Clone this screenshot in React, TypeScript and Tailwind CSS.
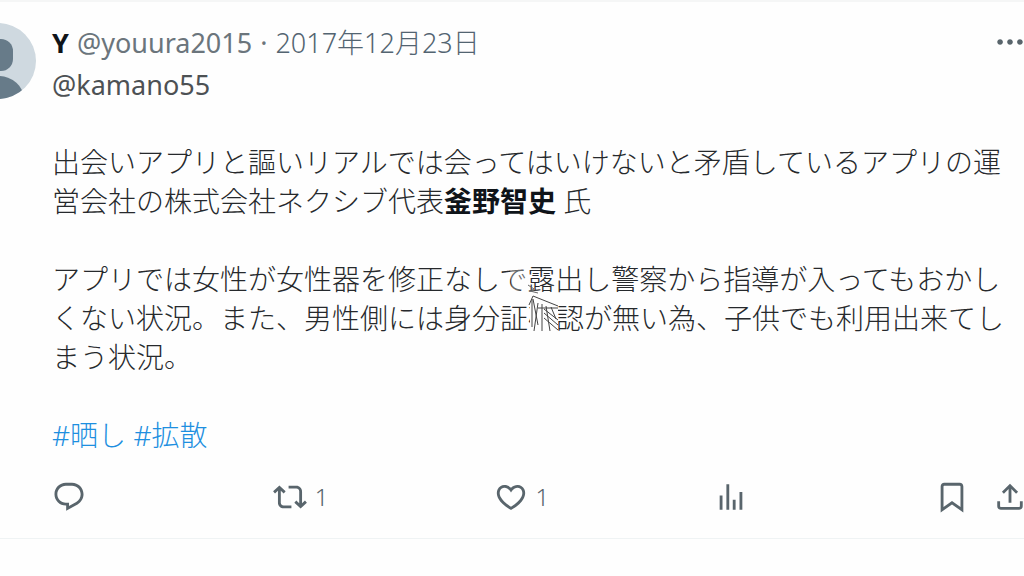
import type { ReactNode } from 'react';

const icons = {
  reply:
    'M1.751 10c0-4.42 3.584-8 8.005-8h4.366c4.49 0 8.129 3.64 8.129 8.13 0 2.96-1.607 5.68-4.196 7.11l-8.054 4.46v-3.69h-.067c-4.49.1-8.183-3.51-8.183-8.01zm8.005-6c-3.317 0-6.005 2.69-6.005 6 0 3.37 2.77 6.08 6.138 6.01l.351-.01h1.761v2.3l5.087-2.81c1.951-1.08 3.163-3.13 3.163-5.36 0-3.39-2.744-6.13-6.129-6.13H9.756z',
  repost:
    'M4.5 3.88l4.432 4.14-1.364 1.46L5.5 7.55V16c0 1.1.896 2 2 2H13v2H7.5c-2.209 0-4-1.79-4-4V7.55L1.432 9.48.068 8.02 4.5 3.88zM16.5 6H11V4h5.5c2.209 0 4 1.79 4 4v8.45l2.068-1.93 1.364 1.46-4.432 4.14-4.432-4.14 1.364-1.46 2.068 1.93V8c0-1.1-.896-2-2-2z',
  like: 'M16.697 5.5c-1.222-.06-2.679.51-3.89 2.16l-.805 1.09-.806-1.09C9.984 6.01 8.526 5.44 7.304 5.5c-1.243.07-2.349.78-2.91 1.91-.552 1.12-.633 2.78.479 4.82 1.074 1.97 3.257 4.27 7.129 6.61 3.87-2.34 6.052-4.64 7.126-6.61 1.111-2.04 1.03-3.7.477-4.82-.561-1.13-1.666-1.84-2.908-1.91zm4.187 7.69c-1.351 2.48-4.001 5.12-8.379 7.67l-.503.3-.504-.3c-4.379-2.55-7.029-5.19-8.382-7.67-1.36-2.5-1.41-4.86-.514-6.67.887-1.79 2.647-2.91 4.601-3.01 1.651-.09 3.368.56 4.798 2.01 1.429-1.45 3.146-2.1 4.796-2.01 1.954.1 3.714 1.22 4.601 3.01.896 1.81.846 4.17-.514 6.67z',
  views: 'M8.75 21V3h2v18h-2zM18 21V8.5h2V21h-2zM4 21l.004-10h2L6 21H4zm9.248 0v-7h2v7h-2z',
  bookmark:
    'M4 4.5C4 3.12 5.119 2 6.5 2h11C18.881 2 20 3.12 20 4.5v18.44l-8-5.71-8 5.71V4.5zM6.5 4c-.276 0-.5.22-.5.5v14.56l6-4.29 6 4.29V4.5c0-.28-.224-.5-.5-.5h-11z',
  share:
    'M12 2.59l5.7 5.7-1.41 1.42L13 6.41V16h-2V6.41l-3.3 3.3-1.41-1.42L12 2.59zM21 15l-.02 3.51c0 1.38-1.12 2.49-2.5 2.49H5.5C4.11 21 3 19.88 3 18.5V15h2v3.5c0 .28.22.5.5.5h12.98c.28 0 .5-.22.5-.5L19 15h2z',
  more: 'M3 12c0-1.1.9-2 2-2s2 .9 2 2-.9 2-2 2-2-.9-2-2zm9 2c1.1 0 2-.9 2-2s-.9-2-2-2-2 .9-2 2 .9 2 2 2zm7 0c1.1 0 2-.9 2-2s-.9-2-2-2-2 .9-2 2 .9 2 2 2z',
};

function IconButton({ icon, label, count }: { icon: keyof typeof icons; label: string; count?: number }) {
  return (
    <button type="button" aria-label={label} className="flex items-center gap-2 text-[#59656c]">
      <svg viewBox="0 0 24 24" className="size-[34px] shrink-0 fill-current" aria-hidden="true">
        <path d={icons[icon]} />
      </svg>
      {count !== undefined && <span className="text-2xl leading-8">{count}</span>}
    </button>
  );
}

function Avatar() {
  return (
    <svg viewBox="0 0 76 76" className="size-[76px] shrink-0" aria-hidden="true">
      <defs>
        <clipPath id="avatar">
          <circle cx="38" cy="38" r="38" />
        </clipPath>
      </defs>
      <g clipPath="url(#avatar)">
        <rect width="76" height="76" fill="#cfd9e0" />
        <rect x="23" y="16" width="30" height="32" rx="12" fill="#677b89" />
        <ellipse cx="38" cy="76" rx="26" ry="23" fill="#677b89" />
      </g>
    </svg>
  );
}

// mouse pointer with its trail, floating over the post text
function Pointer() {
  return (
    <svg viewBox="0 0 60 72" className="absolute left-[458px] top-[198px] w-[60px] h-[72px]" fill="none" aria-hidden="true">
      <path d="M0 6 L17 4 L19 12 L15 26 L2 30 Z" fill="#fefefe" opacity="0.3" />
      <path d="M23 32 L48 42 L48 69 L20 69 L20 40 Z" fill="#fefefe" />
      <path
        d="M23 33 L48 43 M23 33 L19 42 M22 36 V64 M23 36 L28 62 M28 40 L24 68 M32 41 V68 M28 45 H48 M34 46 L48 57 M34 50 L48 62 M34 55 L48 67 M36 43 L40 68 M41 44 L46 56"
        stroke="#444"
      />
      <path d="M18 22 L24 26 L20 28 L28 30" stroke="#666" />
    </svg>
  );
}

function HashLink({ children }: { children: ReactNode }) {
  return (
    <a href="#" className="text-[#1d8fe0]">
      {children}
    </a>
  );
}

export default function App() {
  return (
    <main className="min-h-screen overflow-hidden bg-[#fefefe] border-t-2 border-[#f5f6f6] font-['Noto_Sans','Noto_Sans_CJK_JP',sans-serif] font-light text-[#26292c]">
      <article className="-ml-10 -mr-[3px] flex gap-4 pt-[21px] pb-6 border-b border-[#eff3f4]">
        <Avatar />
        <div className="flex-1 min-w-0">
          <header className="flex items-center justify-between h-[38px]">
            <div className="flex gap-2 text-[27px] leading-[39px] font-normal text-[#6b757c]">
              <span className="font-bold text-[#0f1419]">Y</span>
              <a href="#">@youura2015</a>
              <span>·</span>
              <time dateTime="2017-12-23" className="font-light text-[#536471]">
                2017年12月23日
              </time>
            </div>
            <IconButton icon="more" label="もっと見る" />
          </header>

          <div className="relative mt-1 text-[28px] leading-[39px]">
            <p className="text-[27px] font-normal text-[#4d5154]">@kamano55</p>
            <p className="mt-[39px]">
              出会いアプリと謳いリアルでは会ってはいけないと矛盾しているアプリの運営会社の株式会社ネクシブ代表
              <b className="font-bold text-[#0f1419]">釜野智史</b> 氏
            </p>
            <p className="mt-[39px]">
              アプリでは女性が女性器を修正なしで露出し警察から指導が入ってもおかしくない状況。また、男性側には身分証確認が無い為、子供でも利用出来てしまう状況。
            </p>
            <p className="mt-[39px]">
              <HashLink>#晒し</HashLink> <HashLink>#拡散</HashLink>
            </p>
            <Pointer />
          </div>

          <footer className="mt-[25px] flex">
            <div className="flex-1 grid grid-cols-4">
              <IconButton icon="reply" label="返信" />
              <IconButton icon="repost" label="リポスト" count={1} />
              <IconButton icon="like" label="いいね" count={1} />
              <IconButton icon="views" label="表示" />
            </div>
            <div className="flex gap-6">
              <IconButton icon="bookmark" label="ブックマーク" />
              <IconButton icon="share" label="共有" />
            </div>
          </footer>
        </div>
      </article>
    </main>
  );
}
